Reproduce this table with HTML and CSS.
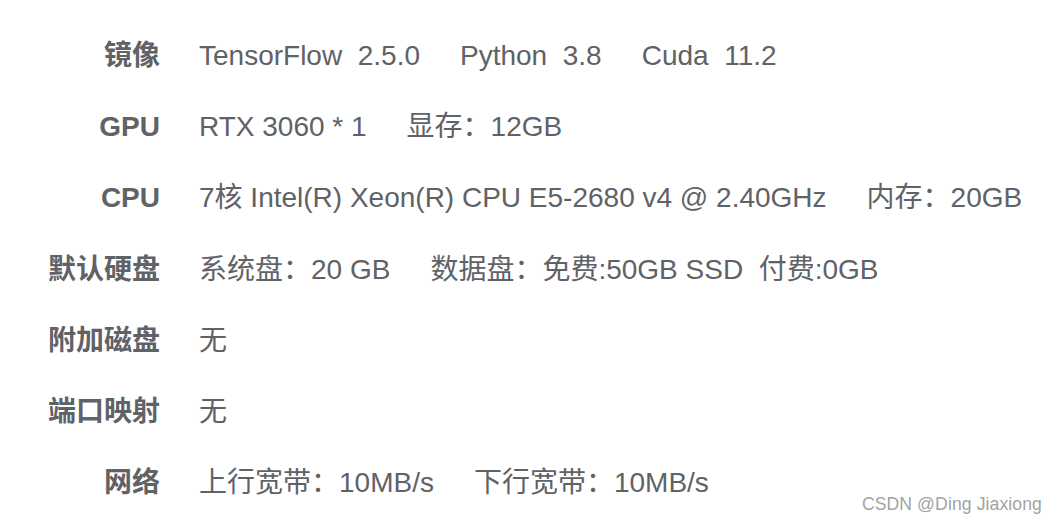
FILE: index.html
```html
<!DOCTYPE html>
<html lang="zh-CN">
<head>
<meta charset="utf-8">
<title>实例配置</title>
<link rel="stylesheet" href="styles.css">
</head>
<body>
<div class="page">
  <div class="spec">
    <div class="label">镜像</div>
    <div class="value"><span class="item">TensorFlow  2.5.0</span><span class="item">Python  3.8</span><span class="item">Cuda  11.2</span></div>

    <div class="label">GPU</div>
    <div class="value"><span class="item">RTX 3060 * 1</span><span class="item">显存：12GB</span></div>

    <div class="label">CPU</div>
    <div class="value"><span class="item">7核 Intel(R) Xeon(R) CPU E5-2680 v4 @ 2.40GHz</span><span class="item">内存：20GB</span></div>

    <div class="label">默认硬盘</div>
    <div class="value"><span class="item">系统盘：20 GB</span><span class="item">数据盘：免费:50GB SSD  付费:0GB</span></div>

    <div class="label">附加磁盘</div>
    <div class="value"><span class="item">无</span></div>

    <div class="label">端口映射</div>
    <div class="value"><span class="item">无</span></div>

    <div class="label">网络</div>
    <div class="value"><span class="item">上行宽带：10MB/s</span><span class="item">下行宽带：10MB/s</span></div>
  </div>
  <div class="watermark">CSDN @Ding Jiaxiong</div>
</div>
</body>
</html>
```
FILE: styles.css
```css
html, body {
  margin: 0;
  padding: 0;
  background: #ffffff;
}

.page {
  position: relative;
  width: 1058px;
  height: 523px;
  overflow: hidden;
  font-family: "Liberation Sans", Arial, "Noto Sans CJK SC", sans-serif;
  color: #606266;
}

.spec {
  display: grid;
  grid-template-columns: 160px auto;
  column-gap: 39px;
  padding-top: 20px;
  font-size: 28px;
  line-height: 71.2px;
}

.label {
  text-align: right;
  font-weight: bold;
  white-space: nowrap;
}

.value {
  white-space: pre;
  display: flex;
  gap: 40px;
}

.watermark {
  position: absolute;
  right: 16px;
  bottom: 8px;
  font-size: 17.6px;
  color: #a3a3a3;
  font-family: "Liberation Sans", Arial, sans-serif;
  letter-spacing: 0.1px;
}
```
